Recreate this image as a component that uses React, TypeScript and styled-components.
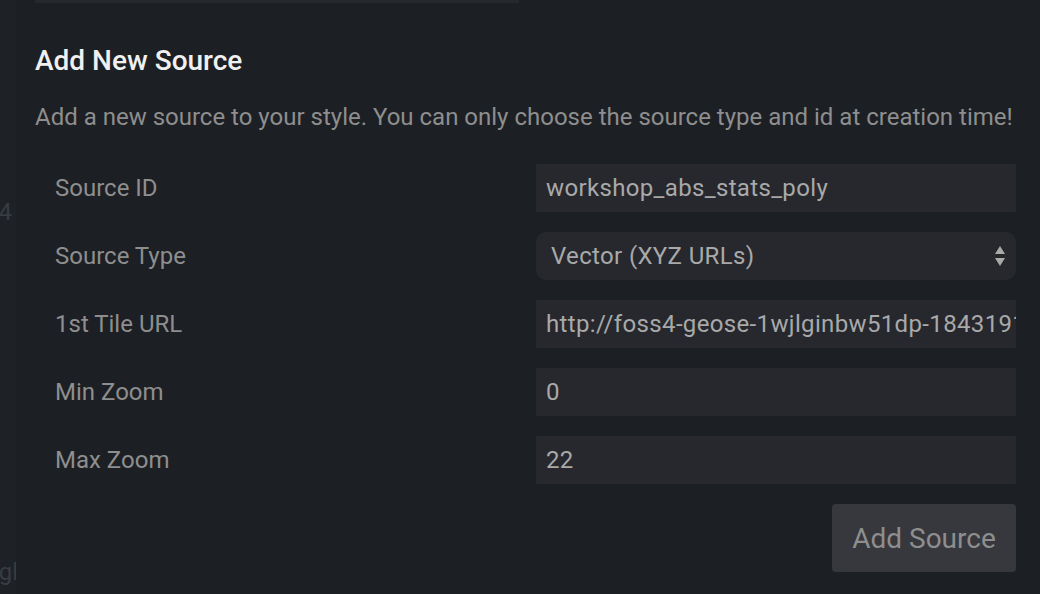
import React from "react";
import styled, { createGlobalStyle } from "styled-components";

const Global = createGlobalStyle`
  html, body { margin: 0; padding: 0; background: #1c1f24; }
  body { font-family: Roboto, "Liberation Sans", sans-serif; }
`;

const Page = styled.div`
  display: flex;
  width: 1040px;
  height: 594px;
  overflow: hidden;
  background: #1c1f24;
`;

const Gutter = styled.div`
  width: 16px;
  flex: none;
  background: #1e2126;
  display: flex;
  flex-direction: column;
  align-items: flex-end;
  overflow: hidden;
  font-size: 24px;
  color: #393c41;
`;

const GutterText = styled.div<{ $top: number; $shift: number }>`
  margin-top: ${(p) => p.$top}px;
  margin-right: ${(p) => p.$shift}px;
  white-space: nowrap;
  line-height: 28px;
`;

const Main = styled.div`
  flex: 1;
  display: flex;
  flex-direction: column;
  padding: 0 24px 0 19px;
`;

const Stub = styled.div`
  width: 484px;
  height: 3px;
  background: #26282e;
`;

const Title = styled.h1`
  margin: 41px 0 0 0;
  font-size: 28px;
  line-height: 34px;
  font-weight: 500;
  color: #f0f0f0;
`;

const Desc = styled.p`
  margin: 24px 0 0 0;
  font-size: 24px;
  line-height: 30px;
  color: #8e8e8e;
  white-space: nowrap;
`;

const Form = styled.div`
  margin-top: 32px;
  display: flex;
  flex-direction: column;
  gap: 20px;
`;

const Row = styled.div`
  display: grid;
  grid-template-columns: 1fr 480px;
  align-items: center;
  height: 48px;
`;

const Label = styled.label`
  padding-left: 20px;
  font-size: 24px;
  color: #8e8e8e;
`;

const Field = styled.div<{ $select?: boolean }>`
  height: 48px;
  box-sizing: border-box;
  background: #26282e;
  border-radius: ${(p) => (p.$select ? "10px" : "0")};
  padding: ${(p) => (p.$select ? "0 10px 0 15px" : "0 0 0 10px")};
  display: flex;
  align-items: center;
  justify-content: space-between;
  font-size: 24px;
  letter-spacing: 0.35px;
  color: #a9a9a9;
  overflow: hidden;
  white-space: nowrap;
`;

const Value = styled.span`
  overflow: hidden;
  white-space: nowrap;
`;

const Footer = styled.div`
  display: flex;
  justify-content: flex-end;
  margin-top: 20px;
`;

const Button = styled.button`
  height: 68px;
  width: 184px;
  border: none;
  border-radius: 4px;
  background: #36383e;
  color: #8e8e8e;
  font-family: Roboto, "Liberation Sans", sans-serif;
  font-size: 28px;
  padding: 0;
`;

const Stepper = () => (
  <svg width="12" height="22" viewBox="0 0 12 22">
    <path d="M6 1 L11 9 L1 9 Z" fill="#a9a9a9" />
    <path d="M6 21 L11 13 L1 13 Z" fill="#a9a9a9" />
  </svg>
);

const rows: { label: string; value: string; select?: boolean }[] = [
  { label: "Source ID", value: "workshop_abs_stats_poly" },
  { label: "Source Type", value: "Vector (XYZ URLs)", select: true },
  { label: "1st Tile URL", value: "http://foss4-geose-1wjlginbw51dp-1843191234.ap-southeast-2.elb.amazonaws.com/{z}/{x}/{y}.pbf" },
  { label: "Min Zoom", value: "0" },
  { label: "Max Zoom", value: "22" },
];

export default function App() {
  return (
    <>
      <Global />
      <Page>
        <Gutter>
          <GutterText $top={198} $shift={4}>4</GutterText>
          <GutterText $top={332} $shift={-2}>gl</GutterText>
        </Gutter>
        <Main>
          <Stub />
          <Title>Add New Source</Title>
          <Desc>Add a new source to your style. You can only choose the source type and id at creation time!</Desc>
          <Form>
            {rows.map((r) => (
              <Row key={r.label}>
                <Label>{r.label}</Label>
                <Field $select={r.select}>
                  <Value>{r.value}</Value>
                  {r.select && <Stepper />}
                </Field>
              </Row>
            ))}
          </Form>
          <Footer>
            <Button>Add Source</Button>
          </Footer>
        </Main>
      </Page>
    </>
  );
}
